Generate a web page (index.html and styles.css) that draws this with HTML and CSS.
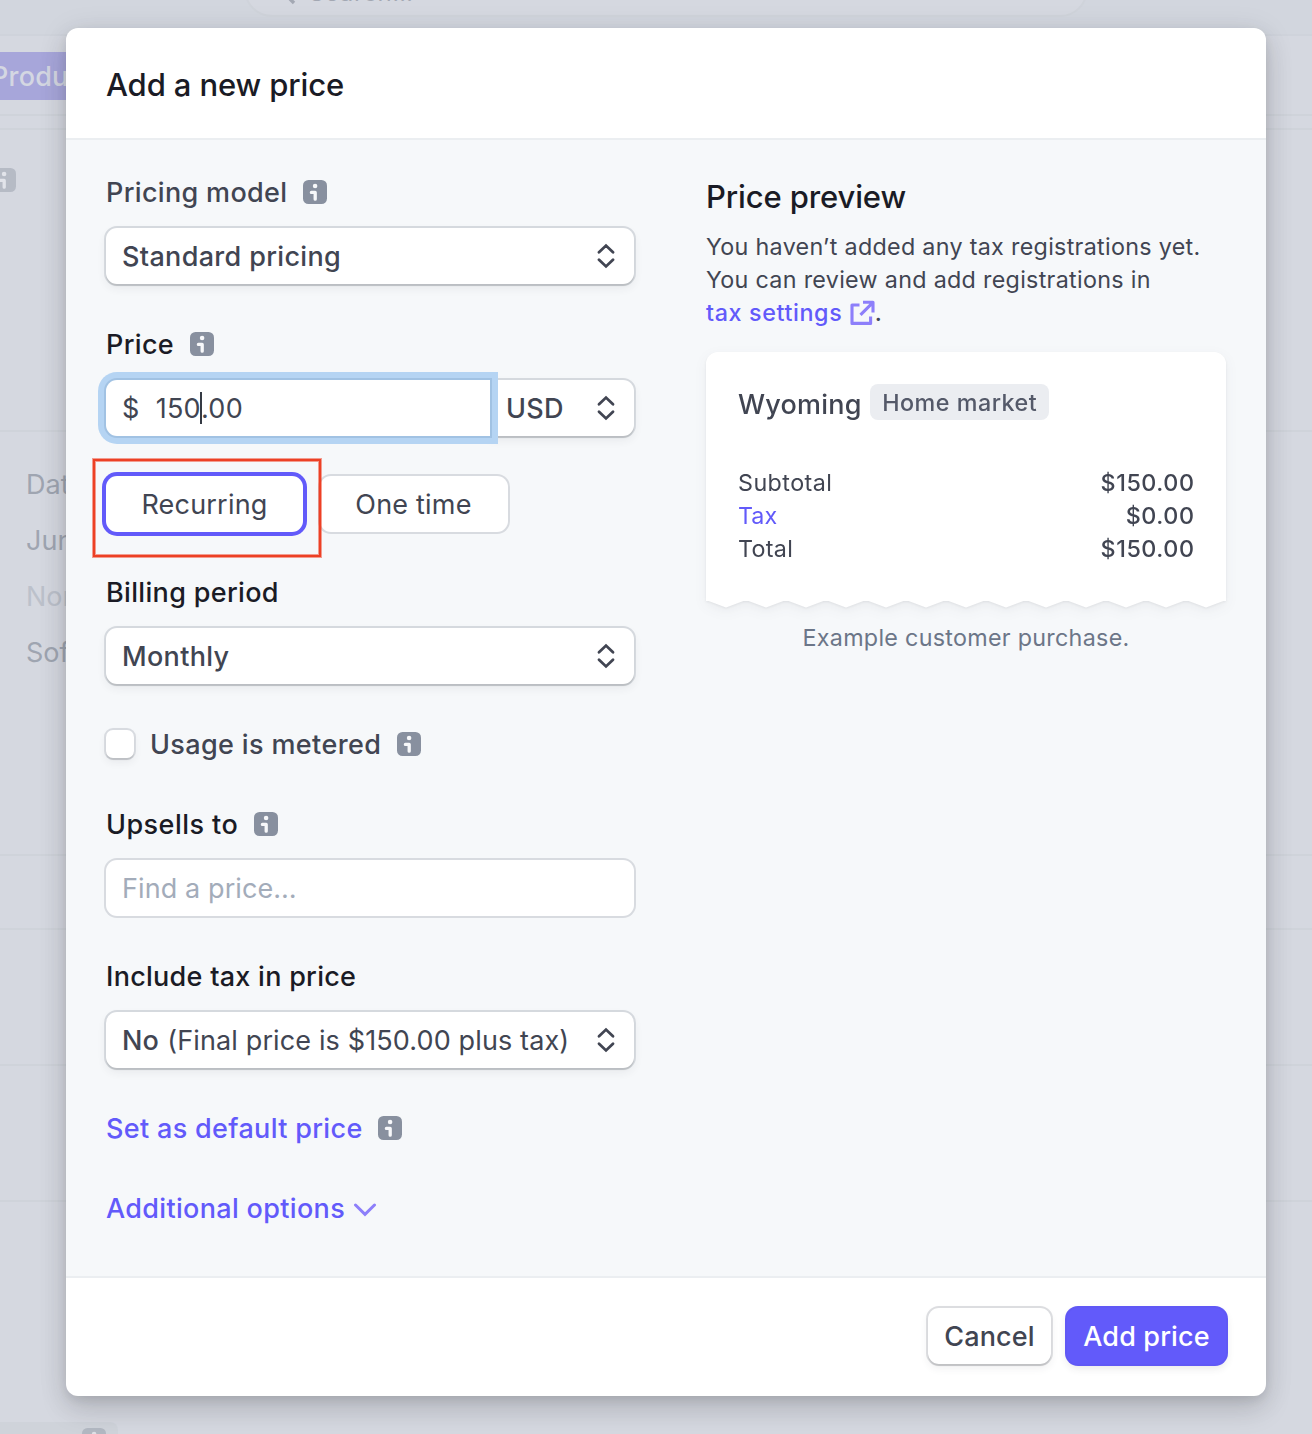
FILE: index.html
```html
<!DOCTYPE html>
<html lang="en">
<head>
<meta charset="utf-8">
<title>Add a new price</title>
<link rel="stylesheet" href="styles.css">
</head>
<body>
<svg class="sprite" aria-hidden="true">
  <symbol id="info" viewBox="0 0 24 24">
    <rect width="24" height="24" rx="5.5" fill="#88909f"/>
    <circle cx="12.1" cy="6" r="2.3" fill="#f7f8fa"/>
    <path d="M8.4 12.4H12.2V19.2" fill="none" stroke="#f7f8fa" stroke-width="3.3" stroke-linecap="round" stroke-linejoin="round"/>
  </symbol>
  <symbol id="sort" viewBox="0 0 18 26">
    <path d="M2 9.3L9 2.6L16 9.3M2 16.7L9 23.4L16 16.7" fill="none" stroke="#414552" stroke-width="2.8" stroke-linecap="round" stroke-linejoin="miter"/>
  </symbol>
</svg>

<div class="page">
  <div class="topbar">
    <div class="search">
      <svg class="search-icon" viewBox="0 0 24 24"><circle cx="10" cy="10" r="7.5" fill="none" stroke="currentColor" stroke-width="3"/><path d="M15.5 15.5L22 22" stroke="currentColor" stroke-width="3.4"/></svg>
      <span>Search…</span>
    </div>
  </div>
  <div class="nav"><span class="nav-tab">Products</span></div>
  <div class="strip"></div>
  <div class="panel panel-info"><svg class="info"><use href="#info"/></svg></div>
  <div class="panel panel-list">
    <span>Date</span><span>June</span><span class="faint">None</span><span>Soft</span>
  </div>
  <div class="panel panel-a"></div>
  <div class="panel panel-b"></div>
  <div class="panel panel-c"></div>
  <div class="panel panel-d"><div class="chip"><svg class="info"><use href="#info"/></svg></div></div>
</div>

<div class="modal">
  <header class="modal-header"><h1>Add a new price</h1></header>
  <div class="modal-body">
    <form class="form">
      <div class="field">
        <div class="label soft"><span class="text">Pricing model</span><svg class="info"><use href="#info"/></svg></div>
        <div class="select"><span class="text">Standard pricing</span><svg class="sort"><use href="#sort"/></svg></div>
      </div>
      <div class="field">
        <div class="label"><span class="text">Price</span><svg class="info"><use href="#info"/></svg></div>
        <div class="price-row">
          <div class="amount"><span class="text">$</span><span class="text">150<i class="caret"></i>.00</span></div>
          <div class="select unit"><span class="text">USD</span><svg class="sort"><use href="#sort"/></svg></div>
        </div>
      </div>
      <div class="toggle">
        <div class="option selected"><span class="text">Recurring</span></div>
        <div class="option"><span class="text">One time</span></div>
        <div class="marker"></div>
      </div>
      <div class="field">
        <div class="label"><span class="text">Billing period</span></div>
        <div class="select"><span class="text">Monthly</span><svg class="sort"><use href="#sort"/></svg></div>
      </div>
      <div class="label soft"><span class="checkbox"></span><span class="text usage">Usage is metered</span><svg class="info"><use href="#info"/></svg></div>
      <div class="field">
        <div class="label"><span class="text upsells">Upsells to</span><svg class="info"><use href="#info"/></svg></div>
        <div class="input"><span class="text">Find a price…</span></div>
      </div>
      <div class="field">
        <div class="label"><span class="text include">Include tax in price</span></div>
        <div class="select"><span class="text"><span class="answer">No</span><span class="detail">(Final price is $150.00 plus tax)</span></span><svg class="sort"><use href="#sort"/></svg></div>
      </div>
      <div class="label link"><span class="text">Set as default price</span><svg class="info"><use href="#info"/></svg></div>
      <div class="label link"><span class="text">Additional options</span><svg class="chevron" viewBox="0 0 24 14"><path d="M2.5 2L12 11.4L21.5 2" fill="none" stroke="#8d7ffa" stroke-width="3" stroke-linecap="round"/></svg></div>
    </form>

    <aside class="preview">
      <h2>Price preview</h2>
      <div class="note">
        <div>You haven’t added any tax registrations yet.</div>
        <div>You can review and add registrations in</div>
        <div class="note-link"><span>tax settings</span><svg class="external" viewBox="0 0 25 26"><path d="M9.5 5H2V23.4H20.6V16.5M13 2.2H23V12.5M22.5 2.8L10.5 14.8" fill="none" stroke="#8d7ffa" stroke-width="3.1" stroke-linejoin="round"/></svg><span class="stop">.</span></div>
      </div>
      <div class="receipt">
        <div class="receipt-body">
          <div class="market"><span class="text">Wyoming</span><span class="badge">Home market</span></div>
          <div class="line"><span class="subtotal">Subtotal</span><span class="money">$150.00</span></div>
          <div class="line"><span class="tax">Tax</span><span class="money">$0.00</span></div>
          <div class="line"><span>Total</span><span class="money">$150.00</span></div>
        </div>
        <svg class="tear" viewBox="0 0 520 8"><path d="M0 0L20 7.5L40 0L60 7.5L80 0L100 7.5L120 0L140 7.5L160 0L180 7.5L200 0L220 7.5L240 0L260 7.5L280 0L300 7.5L320 0L340 7.5L360 0L380 7.5L400 0L420 7.5L440 0L460 7.5L480 0L500 7.5L520 0Z" fill="#fff"/></svg>
      </div>
      <div class="caption">Example customer purchase.</div>
    </aside>
  </div>
  <footer class="modal-footer">
    <div class="button"><span class="text">Cancel</span></div>
    <div class="button primary"><span class="text">Add price</span></div>
  </footer>
</div>
</body>
</html>
```
FILE: styles.css
```css
* { box-sizing: border-box; }
body {
  margin: 0;
  height: 1434px;
  overflow: hidden;
  display: grid;
  background: #d5d8e0;
  color: #414552;
  font: 400 27px/40px Inter, "Liberation Sans", sans-serif;
}
h1, h2 { margin: 0; font-size: 31px; font-weight: 500; letter-spacing: -.13px; color: #1a1b25; }
span { white-space: nowrap; }
svg { display: block; flex: none; }
.sprite { position: absolute; width: 0; height: 0; }
.text { padding-top: 2px; }

/* Dimmed page behind the dialog */
.page, .modal { grid-area: 1 / 1; }
.page { height: 1434px; overflow: hidden; color: #9fa5b1; }
.topbar { display: flex; height: 36px; background: #d2d6de; border-bottom: 2px solid #cfd3db; }
.search { display: flex; align-items: center; gap: 13px; width: 844px; height: 56px; margin: -39px 0 0 244px; padding: 8px 26px 0; border: 2px solid #cfd3da; border-radius: 28px; background: #d5d8e0; color: #a3a8b3; font-size: 24px; letter-spacing: .6px; }
.search-icon { width: 24px; height: 24px; }
.nav { height: 80px; padding-top: 16px; border-bottom: 2px solid #cfd3da; }
.nav-tab { display: block; width: 160px; height: 48px; margin-left: -9px; background: #a7a6da; color: #d4d7e2; line-height: 50px; font-weight: 500; letter-spacing: .2px; }
.strip { height: 14px; border-bottom: 2px solid #cfd3da; }
.panel { border-bottom: 2px solid #cfd3da; }
.info { width: 24px; height: 24px; margin-left: 15.5px; }
.page .info { opacity: .4; }
.panel-info { height: 302px; padding-top: 38px; }
.panel-info .info { margin-left: -8px; }
.panel-list { display: flex; flex-direction: column; gap: 16px; height: 424px; padding: 33px 0 0 26px; }
.faint { color: #bcc1cb; }
.panel-a { height: 74px; }
.panel-b { height: 136px; }
.panel-c { height: 136px; }
.panel-d { height: 300px; padding-top: 220px; border: 0; }
.chip { width: 118px; height: 40px; padding: 6px 0 0 66px; background: #cfd3da; border-radius: 0 8px 0 0; }

/* Dialog */
.modal {
  display: flex;
  flex-direction: column;
  width: 1200px;
  height: 1368px;
  margin: 28px 0 0 66px;
  z-index: 1;
  background: #fff;
  border-radius: 12px;
  box-shadow: 0 14px 28px rgba(0,0,0,.12), 0 4px 30px rgba(48,49,61,.1), 0 4px 10px rgba(0,0,0,.08);
}
.modal-header { height: 112px; padding: 37px 40px 0; border-bottom: 2px solid #ebeef1; }
.modal-body { display: flex; gap: 72px; height: 1138px; padding: 32px 40px 0; background: #f6f8fa; border-bottom: 2px solid #ebeef1; }
.modal-footer { display: flex; justify-content: flex-end; gap: 16px; padding: 30px 40px 0; }

/* Form */
.form { display: flex; flex-direction: column; gap: 40px; width: 528px; font-weight: 500; letter-spacing: .33px; }
.field { display: flex; flex-direction: column; gap: 16px; }
.label { display: flex; align-items: center; height: 40px; color: #1a1b25; }
.soft { color: #414552; }
.link { color: #625afa; }
.upsells { letter-spacing: .45px; }
.usage { letter-spacing: .37px; }
.include { letter-spacing: .27px; }
.select, .input, .option, .amount { display: flex; align-items: center; height: 56px; padding: 0 19px 0 16px; background: #fff; border-radius: 11px; box-shadow: 0 0 0 2px #d8dbe0; }
.select { justify-content: space-between; box-shadow: 0 2px 1px rgba(0,0,0,.12), 0 0 0 2px #d5d9de, 0 4px 10px rgba(48,49,61,.08); }
.sort { width: 18px; height: 26px; }
.input { color: #a3acba; font-weight: 400; letter-spacing: .1px; }
.price-row { display: flex; }
.amount { width: 384px; gap: 16px; border-radius: 11px 0 0 11px; font-weight: 400; letter-spacing: .3px; z-index: 1; box-shadow: 0 0 0 2px #a1c2e3, 0 0 0 8px #b5d4f3; }
.unit { flex: 1; border-radius: 0 11px 11px 0; }
.caret { display: inline-block; width: 2px; height: 32px; margin: 0 -1px; vertical-align: -6px; background: #353a44; }
.toggle { position: relative; display: flex; gap: 17px; font-weight: 400; letter-spacing: .2px; }
.option { justify-content: center; width: 188px; padding: 0 1px 0 0; }
.option.selected { width: 197px; padding: 0; box-shadow: 0 0 0 4px #625afa; }
.marker { position: absolute; left: -13px; top: -17px; width: 228px; height: 98px; border: 2px solid #ed4025; box-shadow: 0 0 0 1px rgba(237,64,37,.5), inset 0 0 0 1px rgba(237,64,37,.5); }
.checkbox { width: 28px; height: 28px; margin-right: 16px; background: #fff; border-radius: 7px; box-shadow: 0 2px 1px rgba(0,0,0,.12), 0 0 0 2px #d8dbe0, 0 4px 8px rgba(48,49,61,.08); }
.answer { margin-right: 8.5px; letter-spacing: 0; }
.detail { font-weight: 400; letter-spacing: .13px; }
.chevron { width: 24px; height: 14px; margin: 3px 0 0 8px; }

/* Preview */
.preview { width: 520px; font-size: 23.3px; letter-spacing: .3px; }
h2 { padding-top: 5px; }
.note { margin-top: 13px; line-height: 33px; }
.note-link { display: flex; color: #625afa; font-weight: 500; letter-spacing: .63px; }
.external { width: 25px; height: 26px; margin: 4px 0 0 7.5px; }
.stop { color: #414552; }
.receipt { margin-top: 23px; filter: drop-shadow(0 1px 1px rgba(0,0,0,.06)) drop-shadow(0 4px 6px rgba(48,49,61,.06)); }
.receipt-body { height: 249px; padding: 32px 32px 0; background: #fff; border-radius: 12px 12px 0 0; }
.tear { width: 520px; height: 8px; margin-top: -1px; }
.market { display: flex; gap: 8.5px; height: 82px; font-size: 27px; font-weight: 500; letter-spacing: .22px; }
.market .text { padding-top: 1px; }
.badge { height: 36px; padding: 0 11.5px 0 12px; background: #ebedf1; border-radius: 8px; color: #545969; font-size: 23.3px; line-height: 37px; letter-spacing: .5px; }
.line { display: flex; justify-content: space-between; line-height: 33px; }
.subtotal { letter-spacing: .45px; }
.money { margin-right: -.5px; font-weight: 500; letter-spacing: .55px; }
.tax { color: #625afa; letter-spacing: 0; }
.caption { margin-top: 10px; color: #6c7688; text-align: center; letter-spacing: .29px; }

.button { display: flex; align-items: center; justify-content: center; width: 123px; height: 56px; border-radius: 11px; font-weight: 500; letter-spacing: .15px; box-shadow: 0 2px 1px rgba(0,0,0,.12), 0 0 0 2px #dcdde0, 0 4px 8px rgba(48,49,61,.08); }
.primary { width: 159px; background: #625afa; color: #fff; box-shadow: 0 0 0 2px #6058f5, 0 4px 8px rgba(48,49,61,.12); }
```
